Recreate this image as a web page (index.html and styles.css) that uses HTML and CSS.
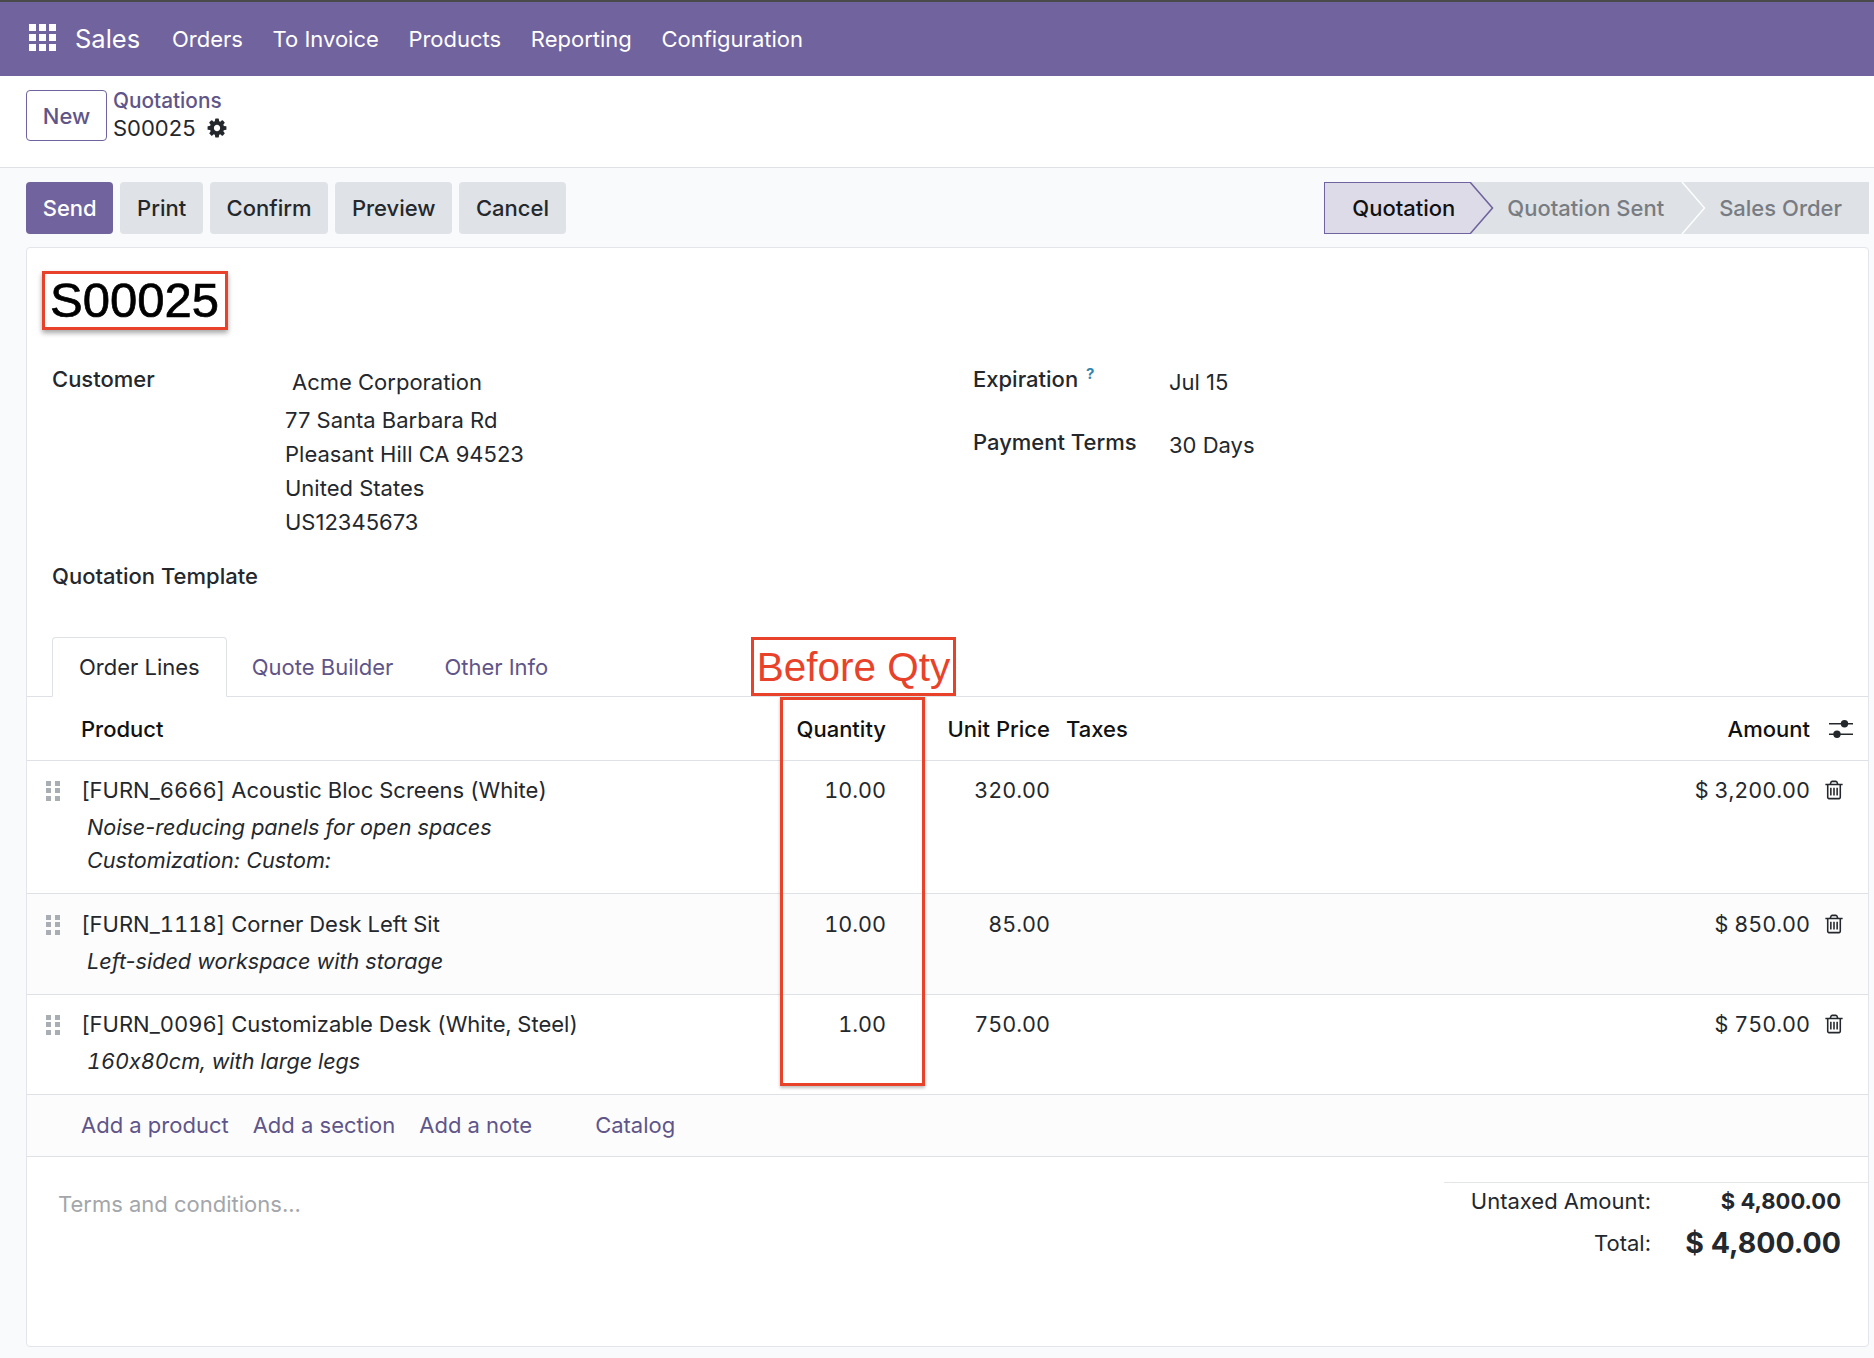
FILE: index.html
```html
<!DOCTYPE html>
<html lang="en">
<head>
  <meta charset="UTF-8" />
  <title>S00025 - Sales</title>
  <link rel="stylesheet" href="styles.css">
</head>
<body>
  <nav class="navbar">
    <svg class="apps-icon" viewBox="0 0 27 27" aria-hidden="true">
      <rect x="0" y="0" width="7" height="7"/><rect x="10" y="0" width="7" height="7"/><rect x="20" y="0" width="7" height="7"/>
      <rect x="0" y="10" width="7" height="7"/><rect x="10" y="10" width="7" height="7"/><rect x="20" y="10" width="7" height="7"/>
      <rect x="0" y="20" width="7" height="7"/><rect x="10" y="20" width="7" height="7"/><rect x="20" y="20" width="7" height="7"/>
    </svg>
    <span class="brand">Sales</span>
    <a class="nav-link">Orders</a>
    <a class="nav-link">To Invoice</a>
    <a class="nav-link">Products</a>
    <a class="nav-link">Reporting</a>
    <a class="nav-link">Configuration</a>
  </nav>

  <header class="control-panel">
    <button class="btn-new">New</button>
    <div class="breadcrumb">
      <a class="crumb-link">Quotations</a>
      <div class="crumb-current">S00025
        <svg class="gear-icon" viewBox="0 0 1792 1792" aria-hidden="true"><path d="M1152 896q0-106-75-181t-181-75-181 75-75 181 75 181 181 75 181-75 75-181zm512-109v222q0 12-8 23t-20 13l-185 28q-19 54-39 91 35 50 107 138 10 12 10 25t-9 23q-27 37-99 108t-94 71q-12 0-26-9l-138-108q-44 23-91 38-16 136-29 186-7 28-36 28h-222q-14 0-24.5-8.5t-11.5-21.5l-28-184q-49-16-90-37l-141 107q-10 9-25 9-14 0-25-11-126-114-165-168-7-10-7-23 0-12 8-23 15-21 51-66.5t54-70.5q-27-50-41-99l-183-27q-13-2-21-12.5t-8-23.5v-222q0-12 8-23t19-13l186-28q14-46 39-92-40-57-107-138-10-12-10-24 0-10 9-23 26-36 98.5-107.5t94.5-71.5q13 0 26 10l138 107q44-23 91-38 16-136 29-186 7-28 36-28h222q14 0 24.5 8.5t11.5 21.5l28 184q49 16 90 37l142-107q9-9 24-9 13 0 25 10 129 119 165 170 7 8 7 22 0 12-8 23-15 21-51 66.5t-54 70.5q26 50 41 98l183 28q13 2 21 12.5t8 23.5z"/></svg>
      </div>
    </div>
  </header>

  <main class="content">
    <div class="action-row">
      <div class="actions">
        <button class="btn btn-primary">Send</button>
        <button class="btn">Print</button>
        <button class="btn">Confirm</button>
        <button class="btn">Preview</button>
        <button class="btn">Cancel</button>
      </div>
      <div class="statusbar">
        <div class="stage stage-active">Quotation
          <svg class="stage-arrow" viewBox="0 0 24 52" aria-hidden="true"><polygon points="0,0.8 22.5,26 0,51.2" fill="#dddbe8"/><polyline points="0,0.8 0.6,0.8 22.5,26 0.6,51.2 0,51.2" fill="none" stroke="#71639e" stroke-width="1.6"/></svg>
        </div>
        <div class="stage">Quotation Sent
          <svg class="stage-arrow" viewBox="0 0 24 52" aria-hidden="true"><polygon points="0,0 22.5,26 0,52" fill="#dee2e6"/><polyline points="0,0 22.5,26 0,52" fill="none" stroke="#fff" stroke-width="1.4"/></svg>
        </div>
        <div class="stage">Sales Order</div>
      </div>
    </div>

    <section class="sheet">
      <h1 class="title-box">S00025</h1>

      <div class="form-groups">
        <div class="form-col-left">
          <div class="field-row">
            <label class="field-label">Customer</label>
            <div class="address">
              <div class="partner-name">Acme Corporation</div>
              <div>77 Santa Barbara Rd</div>
              <div>Pleasant Hill CA 94523</div>
              <div>United States</div>
              <div>US12345673</div>
            </div>
          </div>
          <div class="field-row template-row">
            <label class="field-label">Quotation Template</label>
          </div>
        </div>
        <div class="form-col-right">
          <div class="field-row narrow">
            <label class="field-label">Expiration <sup class="help">?</sup></label>
            <div class="field-value">Jul 15</div>
          </div>
          <div class="field-row narrow">
            <label class="field-label">Payment Terms</label>
            <div class="field-value">30 Days</div>
          </div>
        </div>
      </div>

      <div class="tabs">
        <a class="tab tab-active">Order Lines</a>
        <a class="tab">Quote Builder</a>
        <a class="tab">Other Info</a>
      </div>

      <table class="lines">
        <colgroup>
          <col class="col-handle"><col class="col-product"><col class="col-qty"><col class="col-price"><col><col class="col-amount"><col class="col-action">
        </colgroup>
        <thead>
          <tr>
            <th></th>
            <th>Product</th>
            <th class="num">Quantity</th>
            <th class="num">Unit Price</th>
            <th>Taxes</th>
            <th class="num">Amount</th>
            <th class="action-cell">
              <svg class="sliders-icon" viewBox="0 0 24 18" aria-hidden="true">
                <rect x="0" y="3" width="24" height="1.5"/><circle cx="15.5" cy="3.7" r="3.7"/>
                <rect x="0" y="13.5" width="24" height="1.5"/><circle cx="8" cy="14.2" r="3.7"/>
              </svg>
            </th>
          </tr>
        </thead>
        <tbody>
          <tr>
            <td class="handle-cell"><span class="handle"></span></td>
            <td>
              <div class="product">[FURN_6666] Acoustic Bloc Screens (White)</div>
              <div class="desc">Noise-reducing panels for open spaces<br>Customization: Custom:</div>
            </td>
            <td class="num">10.00</td>
            <td class="num">320.00</td>
            <td></td>
            <td class="num">$ 3,200.00</td>
            <td class="action-cell"><svg class="trash-icon" viewBox="0 0 1792 1792" aria-hidden="true"><use href="#trash"/></svg></td>
          </tr>
          <tr class="striped">
            <td class="handle-cell"><span class="handle"></span></td>
            <td>
              <div class="product">[FURN_1118] Corner Desk Left Sit</div>
              <div class="desc">Left-sided workspace with storage</div>
            </td>
            <td class="num">10.00</td>
            <td class="num">85.00</td>
            <td></td>
            <td class="num">$ 850.00</td>
            <td class="action-cell"><svg class="trash-icon" viewBox="0 0 1792 1792" aria-hidden="true"><use href="#trash"/></svg></td>
          </tr>
          <tr>
            <td class="handle-cell"><span class="handle"></span></td>
            <td>
              <div class="product">[FURN_0096] Customizable Desk (White, Steel)</div>
              <div class="desc desc-sized">160x80cm, with large legs</div>
            </td>
            <td class="num">1.00</td>
            <td class="num">750.00</td>
            <td></td>
            <td class="num">$ 750.00</td>
            <td class="action-cell"><svg class="trash-icon" viewBox="0 0 1792 1792" aria-hidden="true"><use href="#trash"/></svg></td>
          </tr>
        </tbody>
      </table>

      <div class="add-row">
        <a>Add a product</a>
        <a>Add a section</a>
        <a>Add a note</a>
        <a class="catalog">Catalog</a>
      </div>

      <div class="sheet-footer">
        <div class="terms">Terms and conditions...</div>
        <div class="totals">
          <div class="total-line"><span class="total-label">Untaxed Amount:</span><strong class="total-value">$ 4,800.00</strong></div>
          <div class="total-line grand"><span class="total-label">Total:</span><strong class="total-value">$ 4,800.00</strong></div>
        </div>
      </div>

      <div class="note-box note-before">Before Qty</div>
      <div class="note-box note-qty"></div>
    </section>
  </main>

  <svg class="svg-defs" aria-hidden="true">
    <symbol id="trash" viewBox="0 0 1792 1792"><path d="M704 736v576q0 14-9 23t-23 9h-64q-14 0-23-9t-9-23v-576q0-14 9-23t23-9h64q14 0 23 9t9 23zm256 0v576q0 14-9 23t-23 9h-64q-14 0-23-9t-9-23v-576q0-14 9-23t23-9h64q14 0 23 9t9 23zm256 0v576q0 14-9 23t-23 9h-64q-14 0-23-9t-9-23v-576q0-14 9-23t23-9h64q14 0 23 9t9 23zm128 724v-948h-896v948q0 22 7 40.5t14.5 27 10.5 8.5h832q3 0 10.5-8.5t14.5-27 7-40.5zm-672-1076h448l-48-117q-7-9-17-11h-317q-10 2-17 11zm928 32v64q0 14-9 23t-23 9h-96v948q0 83-47 143.5t-113 60.5h-832q-66 0-113-58.5t-47-141.5v-952h-96q-14 0-23-9t-9-23v-64q0-14 9-23t23-9h309l70-167q15-37 54-63t79-26h320q40 0 79 26t54 63l70 167h309q14 0 23 9t9 23z"/></symbol>
  </svg>
</body>
</html>
```

FILE: styles.css
```css
* {
  box-sizing: border-box;
}

body {
  margin: 0;
  height: 1358px;
  overflow: hidden;
  font-family: Inter, "Noto Sans", sans-serif;
  font-feature-settings: "calt" 0;
  font-size: 22px;
  line-height: 30px;
  color: #24282d;
  background: #f9fafb;
}

a {
  color: #5f5589;
  text-decoration: none;
}

.svg-defs {
  display: none;
}

/* top bar */
.navbar {
  display: flex;
  align-items: center;
  height: 76px;
  padding: 0 0 0 29px;
  background: #71639e;
  border-top: 2px solid #4a4a4a;
  color: #fff;
}

.apps-icon {
  width: 27px;
  height: 27px;
  fill: #fff;
  margin-top: -3px;
}

.brand {
  margin-left: 19px;
  margin-right: 17px;
  font-size: 25.5px;
}

.nav-link {
  color: #fff;
  padding: 0 14.8px;
}

/* breadcrumb bar */
.control-panel {
  display: flex;
  align-items: flex-start;
  height: 92px;
  padding: 14px 26px 0;
  background: #fff;
  border-bottom: 1px solid #dee2e6;
}

.btn-new {
  width: 81px;
  height: 51px;
  font: inherit;
  font-weight: 500;
  color: #5f5589;
  background: #fff;
  border: 1px solid #71639e;
  border-radius: 4px;
}

.breadcrumb {
  margin-left: 6px;
  margin-top: -4px;
}

.crumb-link {
  display: block;
  height: 28px;
  font-size: 20.8px;
  font-weight: 500;
}

.crumb-current {
  display: flex;
  align-items: center;
  gap: 10px;
  height: 28px;
}

.gear-icon {
  width: 22px;
  height: 22px;
  fill: #24282d;
}

/* buttons and status */
.content {
  padding: 14px 5px 0 26px;
}

.action-row {
  display: flex;
  justify-content: space-between;
  height: 52px;
}

.actions {
  display: flex;
  gap: 7px;
}

.btn {
  height: 52px;
  padding: 0 16.7px;
  font: inherit;
  font-weight: 500;
  color: #24282d;
  background: #dfe2e6;
  border: 0;
  border-radius: 4px;
}

.btn-primary {
  color: #fff;
  background: #71639e;
}

.statusbar {
  display: flex;
  font-weight: 500;
}

.stage {
  position: relative;
  display: flex;
  align-items: center;
  height: 52px;
  padding: 0 19px 0 36px;
  color: #787c82;
  background: #dee2e6;
}

.stage:last-child {
  padding-right: 27px;
}

.stage:first-child {
  padding-left: 27px;
  padding-right: 16px;
  color: #111;
  background: #dddbe8;
  border: 1.5px solid #71639e;
  border-right: 0;
}

.stage-arrow {
  position: absolute;
  top: 0;
  right: -23px;
  width: 24px;
  height: 52px;
  z-index: 1;
  overflow: visible;
}

.stage-active .stage-arrow {
  top: -1.5px;
}

/* sheet */
.sheet {
  position: relative;
  height: 1100px;
  margin-top: 13px;
  background: #fff;
  border: 1px solid #e3e5ea;
  border-radius: 4px;
}

.title-box {
  width: 186px;
  height: 59px;
  margin: 23px 0 0 15px;
  padding-left: 5px;
  font-family: "Liberation Sans", Arial, sans-serif;
  font-size: 49px;
  font-weight: 400;
  line-height: 53px;
  color: #000;
  -webkit-text-stroke: 0.7px #000;
  border: 3.5px solid #e8432a;
  box-shadow: 0 3px 5px rgba(0, 0, 0, 0.35);
}

.form-groups {
  display: flex;
  margin-top: 34px;
  padding-left: 25px;
  height: 273px;
}

.form-col-left {
  width: 921px;
}

.field-row {
  display: flex;
}

.field-label {
  width: 233px;
  font-weight: 500;
}

.address {
  margin-top: 1px;
  line-height: 34px;
}

.partner-name {
  padding-left: 7px;
  margin-bottom: 4px;
}

.template-row {
  margin-top: 22px;
}

.narrow {
  height: 63px;
}

.narrow .field-label {
  width: 196px;
}

.field-value {
  margin-top: 3px;
}

.help {
  font-size: 15px;
  font-weight: 700;
  line-height: 0;
  color: #2f86b0;
  margin-left: 2px;
}

.tabs {
  display: flex;
  height: 60px;
  padding-left: 25px;
  border-bottom: 1px solid #dee2e6;
}

.tab {
  height: 60px;
  padding: 15px 26px 0 25px;
}

.tab-active {
  padding-top: 14px;
  padding-left: 26px;
  color: #24282d;
  background: #fff;
  border: 1px solid #dee2e6;
  border-bottom-color: #fff;
  border-radius: 4px 4px 0 0;
}

/* order lines */
.lines {
  width: 100%;
  border-collapse: collapse;
  table-layout: fixed;
  font-variant-numeric: tabular-nums;
}

.col-handle {
  width: 46px;
}

.col-product {
  width: 707px;
}

.col-qty {
  width: 114px;
}

.col-price {
  width: 164px;
}

.col-amount {
  width: 200px;
}

.col-action {
  width: 50px;
}

.lines th {
  height: 63px;
  padding: 1px 8px 0;
  text-align: left;
  font-weight: 500;
  color: #111;
  border-bottom: 1px solid #dee2e6;
}

.lines td {
  padding: 14px 8px 16px;
  vertical-align: top;
  border-bottom: 1px solid #dee2e6;
}

.lines td:nth-child(2) {
  padding-right: 0;
}

.lines .num {
  text-align: right;
}

.lines td.num {
  font-size: 21.6px;
}

.striped {
  background: #fcfcfd;
}

.lines .striped td {
  padding-top: 15px;
}

.lines .handle-cell {
  padding-left: 0;
  padding-right: 0;
}

.handle {
  display: block;
  width: 14px;
  height: 20px;
  margin: 6px 0 0 19px;
  background-image: linear-gradient(#a9aeb5, #a9aeb5), linear-gradient(#a9aeb5, #a9aeb5), linear-gradient(#a9aeb5, #a9aeb5), linear-gradient(#a9aeb5, #a9aeb5), linear-gradient(#a9aeb5, #a9aeb5), linear-gradient(#a9aeb5, #a9aeb5);
  background-size: 5px 5px;
  background-position: 0 0, 9px 0, 0 7.5px, 9px 7.5px, 0 15px, 9px 15px;
  background-repeat: no-repeat;
}

.desc {
  margin-top: 6px;
  padding-left: 6px;
  font-size: 21.6px;
  line-height: 33px;
  font-style: italic;
  font-variant-numeric: normal;
}

.desc-sized {
  font-variant-numeric: tabular-nums;
}

.lines .action-cell {
  padding-left: 0;
  padding-right: 0;
}

.trash-icon {
  display: block;
  width: 22px;
  height: 22px;
  margin: 4px 0 0 5px;
  fill: #24282d;
}

.sliders-icon {
  display: block;
  width: 24px;
  height: 18px;
  margin-left: 11px;
  fill: #24282d;
}

.add-row {
  display: flex;
  gap: 24px;
  align-items: center;
  height: 62px;
  padding-left: 54px;
  background: #fcfcfd;
  border-bottom: 1px solid #dee2e6;
}

.catalog {
  margin-left: 39px;
}

.sheet-footer {
  display: flex;
  justify-content: space-between;
  padding: 25px 0 0 31px;
}

.terms {
  margin-top: 7px;
  color: #a3a6aa;
}

.totals {
  width: 424px;
  border-top: 1px solid #e3e5ea;
  padding: 3px 27px 0 0;
}

.total-line {
  display: flex;
  align-items: center;
  justify-content: flex-end;
  height: 30px;
}

.total-label {
  text-align: right;
}

.total-value {
  width: 190px;
  text-align: right;
  font-weight: 700;
}

.grand {
  height: 44px;
  margin-top: 5px;
}

.grand .total-value {
  font-size: 28.5px;
}

/* red review annotations */
.note-box {
  position: absolute;
  border: 3px solid #e8432a;
}

.note-before {
  left: 724px;
  top: 389px;
  width: 205px;
  height: 59px;
  font-family: "Liberation Sans", Arial, sans-serif;
  font-size: 40.5px;
  line-height: 55px;
  text-align: center;
  white-space: nowrap;
  color: #e8432a;
  background: #fff;
}

.note-qty {
  left: 753px;
  top: 449px;
  width: 145px;
  height: 389px;
  box-shadow: 0 2px 3px rgba(0, 0, 0, 0.25);
}
```
